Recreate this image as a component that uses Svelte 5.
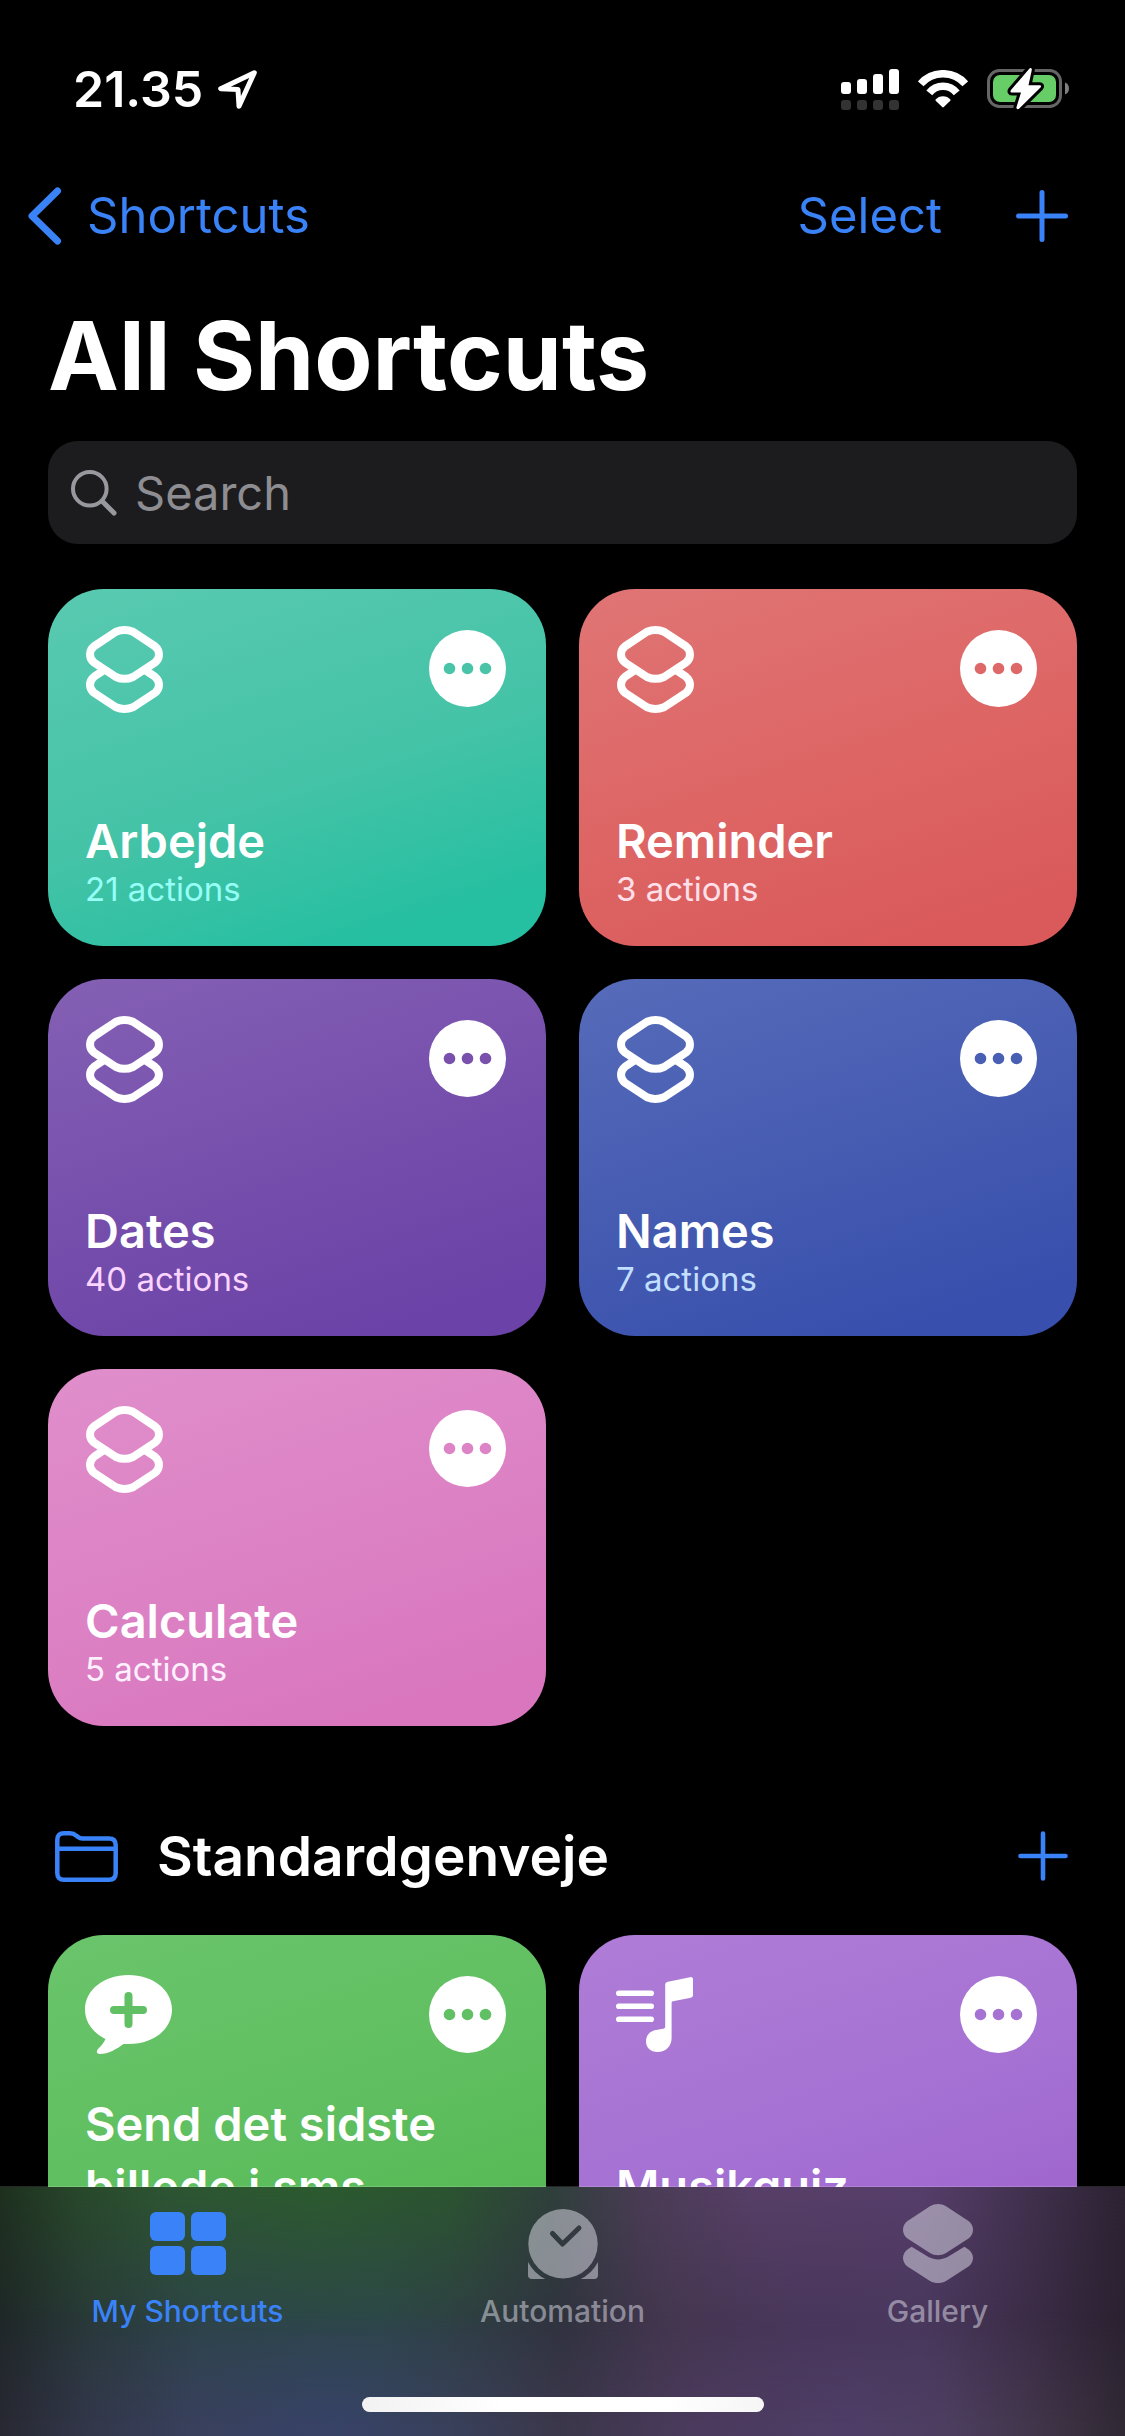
<script>
  const shortcuts = [
    { name: 'Arbejde', count: '21 actions', tone: 'teal', icon: 'stack' },
    { name: 'Reminder', count: '3 actions', tone: 'red', icon: 'stack' },
    { name: 'Dates', count: '40 actions', tone: 'violet', icon: 'stack' },
    { name: 'Names', count: '7 actions', tone: 'blue', icon: 'stack' },
    { name: 'Calculate', count: '5 actions', tone: 'pink', icon: 'stack' }
  ];
  const starters = [
    { name: 'Send det sidste billede i sms', count: '', tone: 'green', icon: 'bubble' },
    { name: 'Musikquiz', count: '', tone: 'lilac', icon: 'music' }
  ];
  let query = $state('');
</script>

{#snippet card(item)}
  <article class="card {item.tone}">
    <div class="card-top">
      {#if item.icon === 'stack'}
        <svg width="77" height="87" viewBox="-1 -1 77 87" overflow="visible" fill="none" stroke="#fff" stroke-width="8" aria-hidden="true">
          <path d="M30 5.7C35.5 3.4 41.5 3.4 47 5.7L69 20.3C74.3 24.5 74.3 32.3 69 36.5L47 51C41.5 53.4 35.5 53.4 30 51L8 36.5C2.7 32.3 2.7 24.5 8 20.3Z" />
          <path d="M19 43.4L8 50.8C2.7 55 2.7 62.6 8 66.8L30 81.3C35.5 83.6 41.5 83.6 47 81.3L69 66.8C74.3 62.6 74.3 55 69 50.8L58 43.4" />
        </svg>
      {:else if item.icon === 'bubble'}
        <svg width="87" height="79" viewBox="0 0 87 79" aria-hidden="true">
          <path fill="#fff" d="M43.500 0C68 0 87 15 87 34.500C87 54 69 69 43.500 69L38.500 69C32 74 23 79 15 79C11.500 79 11 76.500 13 74C16.500 70.500 19 67.500 20.500 64C7.500 57.500 0 47 0 34.500C0 15 19 0 43.500 0Z" />
          <path class="cut" stroke-width="8" stroke-linecap="round" d="M43.500 21V49M29 35H58" />
        </svg>
      {:else}
        <svg width="77" height="75" viewBox="0 0 77 75" aria-hidden="true">
          <path stroke="#fff" stroke-width="5.600" stroke-linecap="round" d="M2.800 16.300H35.200M2.800 29.300H35.200M2.800 42.300H35.200" />
          <path fill="#fff" d="M52 4.700L74 0.200C76 -0.200 77 0.800 77 2.500V18C77 19.500 76.200 20.400 74.800 20.700L57 24.300C56 24.500 55.600 25 55.600 26V61C55.600 69 50 75 41.500 75C34.500 75 30 70.800 30 64.500C30 58 34 54 40 53L47 51.800C48.500 51.500 49.200 51 49.200 49.500V8C49.200 6 50 5.100 52 4.700Z" />
        </svg>
      {/if}
      <button class="more" aria-label="Edit {item.name}">
        <svg width="77" height="77" viewBox="0 0 77 77" aria-hidden="true">
          <circle cx="20.500" cy="38.500" r="5.800" /><circle cx="38.500" cy="38.500" r="5.800" /><circle cx="56.500" cy="38.500" r="5.800" />
        </svg>
      </button>
    </div>
    <div class="card-text">
      <h3>{item.name}</h3>
      <p>{item.count}</p>
    </div>
  </article>
{/snippet}

<div class="screen">
  <header class="status">
    <div class="clock">
      <span>21.35</span>
      <svg width="39" height="39" viewBox="0 0 39 39" fill="none" stroke="#fff" stroke-width="5" stroke-linejoin="round" aria-hidden="true">
        <path d="M36.300 2.700L2.700 18.700L20 19.500L21 36.300Z" />
      </svg>
    </div>
    <div class="indicators">
      <svg width="58" height="41" viewBox="0 0 58 41" aria-hidden="true">
        <g fill="#fff">
          <rect x="0" y="13" width="10" height="12" rx="3" /><rect x="16" y="10" width="10" height="15" rx="3" /><rect x="32" y="5" width="10" height="20" rx="3" /><rect x="48" y="0" width="10" height="25" rx="3" />
        </g>
        <g fill="#333">
          <rect x="0" y="31" width="10" height="10" rx="3" /><rect x="16" y="31" width="10" height="10" rx="3" /><rect x="32" y="31" width="10" height="10" rx="3" /><rect x="48" y="31" width="10" height="10" rx="3" />
        </g>
      </svg>
      <svg width="50" height="38" viewBox="0 0 50 38" aria-hidden="true">
        <g fill="none" stroke="#fff" stroke-width="7.500">
          <path d="M2.700 13.800A29.700 29.700 0 0 1 47.300 13.800" />
          <path d="M11.300 22.800A17.500 17.500 0 0 1 38.700 22.800" />
        </g>
        <path fill="#fff" d="M17.600 29.500C21 25 29 25 32.400 29.500C32.700 30 32.600 30.300 32.300 30.700L25.800 37C25.300 37.500 24.700 37.500 24.200 37L17.700 30.700C17.400 30.300 17.300 30 17.600 29.500Z" />
      </svg>
      <svg width="82" height="42" viewBox="0 0 82 42" aria-hidden="true">
        <rect x="1.500" y="2.500" width="72" height="36" rx="11" fill="none" stroke="#666" stroke-width="3" />
        <rect x="6" y="7" width="63" height="27" rx="7" fill="#67ce67" />
        <path fill="#808080" d="M78 14.500C83.300 16 83.300 25 78 26.500Z" />
        <path fill="#fff" stroke="#000" stroke-width="6" stroke-linejoin="round" paint-order="stroke" d="M42.500 0.500L24 22C23 23.500 23.500 24.500 25 24.500H34L29.500 39C29 41 31 42 32.500 40.300L53.500 19.500C54.500 18.200 54 17.200 52.500 17.200H41.500L44.800 2C45 0.300 43.700 -0.700 42.500 0.500Z" />
      </svg>
    </div>
  </header>

  <nav class="navbar" aria-label="Navigation">
    <a class="back" href="#shortcuts">
      <svg width="34" height="58" viewBox="0 0 34 58" fill="none" stroke="currentColor" stroke-width="7" stroke-linecap="round" stroke-linejoin="round" aria-hidden="true">
        <path d="M29.500 4L4 29L29.500 54" />
      </svg>
      <span>Shortcuts</span>
    </a>
    <div class="nav-actions">
      <button class="plain">Select</button>
      <button class="plain" aria-label="New shortcut">
        <svg width="52" height="52" viewBox="0 0 52 52" stroke="currentColor" stroke-width="5" stroke-linecap="round" aria-hidden="true"><path d="M26 2.500V49.500M2.500 26H49.500" /></svg>
      </button>
    </div>
  </nav>

  <main>
    <h1>All Shortcuts</h1>
    <label class="search">
      <svg width="46" height="46" viewBox="0 0 46 46" fill="none" stroke="#98989f" stroke-linecap="round" aria-hidden="true">
        <circle cx="18.800" cy="18.800" r="16.800" stroke-width="4" />
        <path stroke-width="5" d="M31.500 31.500L43 43" />
      </svg>
      <input type="text" placeholder="Search" aria-label="Search" bind:value={query} />
    </label>

    <section class="grid">
      {#each shortcuts as item}{@render card(item)}{/each}
    </section>

    <section>
      <div class="folder-head">
        <svg width="63" height="51" viewBox="0 0 63 51" fill="none" stroke="#3a82f7" stroke-width="4.500" stroke-linejoin="round" aria-hidden="true">
          <path d="M2.300 9C2.300 4.500 4.500 2.300 9 2.300H15C18 2.300 19.500 3 21.500 4.800L23 6C24.500 7.200 25.500 7.500 27.500 7.500H54C58.500 7.500 60.700 9.700 60.700 14.200V42C60.700 46.500 58.500 48.700 54 48.700H9C4.500 48.700 2.300 46.500 2.300 42ZM2.300 17.800H60.700" />
        </svg>
        <h2>Standardgenveje</h2>
        <button class="plain" aria-label="Add to Standardgenveje">
          <svg width="50" height="50" viewBox="0 0 50 50" stroke="currentColor" stroke-width="4.600" stroke-linecap="round" aria-hidden="true"><path d="M25 2.500V47.500M2.500 25H47.500" /></svg>
        </button>
      </div>
      <div class="grid">
        {#each starters as item}{@render card(item)}{/each}
      </div>
    </section>
  </main>

  <footer class="tabbar">
    <nav class="tabs" aria-label="Tabs">
      <a class="tab active" href="#my-shortcuts" aria-current="page">
        <svg width="76" height="80" viewBox="0 0 76 80" fill="currentColor" aria-hidden="true">
          <rect x="0" y="8" width="35" height="29" rx="6" /><rect x="41" y="8" width="35" height="29" rx="6" /><rect x="0" y="42" width="35" height="29" rx="6" /><rect x="41" y="42" width="35" height="29" rx="6" />
        </svg>
        <span>My Shortcuts</span>
      </a>
      <a class="tab" href="#automation">
        <svg width="70" height="80" viewBox="0 -5 70 80" aria-hidden="true">
          <mask id="face">
            <circle cx="35" cy="34.700" r="34.700" fill="#fff" />
            <path d="M24.500 24.500L34.500 35L51 19" fill="none" stroke="#000" stroke-width="5" stroke-linecap="round" stroke-linejoin="round" />
          </mask>
          <mask id="feet">
            <rect x="0" y="50" width="70" height="20" rx="4" fill="#fff" />
            <circle cx="35" cy="34.700" r="39.500" fill="#000" />
          </mask>
          <rect width="70" height="70" fill="currentColor" mask="url(#face)" />
          <rect width="70" height="70" fill="currentColor" mask="url(#feet)" />
        </svg>
        <span>Automation</span>
      </a>
      <a class="tab" href="#gallery">
        <svg width="70" height="80" viewBox="0 0 70 80" fill="currentColor" aria-hidden="true">
          <path d="M27 2.200C32 -0.600 38 -0.600 43 2.200L65.500 17C71.500 21.500 71.500 30 65.500 34.500L43 49C38 51.900 32 51.900 27 49L4.500 34.500C-1.500 30 -1.500 21.500 4.500 17Z" />
          <path d="M8.600 42.700L25.500 53C32 56.200 38 56.200 44.500 53L61.400 42.700L65.500 45.500C71.500 50 71.500 58 65.500 62.500L43 77C38 79.800 32 79.800 27 77L4.500 62.500C-1.500 58 -1.500 50 4.500 45.500Z" />
        </svg>
        <span>Gallery</span>
      </a>
    </nav>
    <div class="home"></div>
  </footer>
</div>

<style>
  :global(body) {
    margin: 0;
    background: #000;
  }
  .screen {
    position: relative;
    height: 100vh;
    overflow: hidden;
    background: #000;
    color: #fff;
    font-family: Inter, 'Liberation Sans', sans-serif;
  }
  .screen :is(h1, h2, h3, p) {
    margin: 0;
  }
  svg {
    display: block;
    flex: none;
  }
  .status {
    display: flex;
    justify-content: space-between;
    align-items: center;
    height: 58px;
    padding: 60px 56px 0 73px;
  }
  .clock {
    display: flex;
    align-items: center;
    gap: 15px;
    font-size: 50px;
    font-weight: 600;
    line-height: 58px;
  }
  .indicators {
    display: flex;
    align-items: center;
    gap: 19px;
  }
  .navbar {
    display: flex;
    justify-content: space-between;
    align-items: center;
    height: 80px;
    padding: 58px 57px 0 28px;
    margin-bottom: 48px;
    font-size: 49px;
    line-height: 60px;
  }
  .back {
    display: flex;
    align-items: center;
    gap: 25px;
    color: #3a82f7;
    text-decoration: none;
  }
  .nav-actions {
    display: flex;
    align-items: center;
    gap: 74px;
  }
  .plain {
    padding: 0;
    border: 0;
    background: none;
    color: #3a82f7;
    font: inherit;
  }
  main {
    padding: 0 48px;
  }
  h1 {
    font-size: 95px;
    font-weight: 700;
    line-height: 104px;
  }
  .search {
    display: flex;
    align-items: center;
    gap: 18px;
    height: 103px;
    margin: 33px 0 45px;
    padding: 0 23px;
    border-radius: 30px;
    background: #1c1c1e;
  }
  .search input {
    flex: 1;
    min-width: 0;
    padding: 0;
    border: 0;
    outline: 0;
    background: none;
    color: #fff;
    font: 47px/60px Inter, 'Liberation Sans', sans-serif;
  }
  .search input::placeholder {
    color: #8d8d92;
    opacity: 1;
  }
  .grid {
    display: grid;
    grid-template-columns: 1fr 1fr;
    gap: 33px;
  }
  .card {
    display: flex;
    flex-direction: column;
    justify-content: space-between;
    box-sizing: border-box;
    min-height: 357px;
    padding: 36px 40px 40px 37px;
    border-radius: 56px;
    background: linear-gradient(162deg, var(--from), var(--mid) 52%, var(--to) 88%);
  }
  .card-top {
    display: flex;
    justify-content: space-between;
    align-items: center;
    height: 87px;
  }
  .more {
    padding: 0;
    border: 0;
    border-radius: 50%;
    background: #fff;
  }
  .more svg {
    fill: var(--dot);
  }
  .cut {
    stroke: var(--dot);
  }
  .card h3 {
    font-size: 47px;
    font-weight: 600;
    line-height: 63px;
  }
  .card p {
    min-height: 34px;
    color: var(--sub);
    font-size: 33px;
    line-height: 34px;
  }
  .teal { --from: #59cab1; --mid: #45c3a7; --to: #25bfa1; --dot: #49c4a9; --sub: #96fff6; }
  .red { --from: #e07575; --mid: #dd6564; --to: #da5a5b; --dot: #dd6867; --sub: #ffe0ea; }
  .violet { --from: #8460b4; --mid: #754eac; --to: #6b42a7; --dot: #7a50ad; --sub: #fbd4ff; }
  .blue { --from: #566bb9; --mid: #455bb1; --to: #384fad; --dot: #485fb4; --sub: #c3dfff; }
  .pink { --from: #e08ecb; --mid: #dc81c4; --to: #d976be; --dot: #dd84c6; --sub: #fff0ff; }
  .green { --from: #6ac46b; --mid: #5fbf60; --to: #55b752; --dot: #61c063; --sub: #e0ffe0; }
  .lilac { --from: #af7dd7; --mid: #a571d3; --to: #9e64cd; --dot: #a673d2; --sub: #f4e2ff; }
  .folder-head {
    display: flex;
    align-items: center;
    gap: 39px;
    height: 76px;
    padding: 92px 9px 41px 7px;
  }
  .folder-head h2 {
    flex: 1;
    font-size: 55px;
    font-weight: 600;
    line-height: 68px;
  }
  .tabbar {
    position: absolute;
    right: 0;
    bottom: 0;
    left: 0;
    display: flex;
    flex-direction: column;
    justify-content: space-between;
    align-items: center;
    box-sizing: border-box;
    height: 250px;
    padding: 17px 0 24px;
    border-top: 1px solid rgba(255, 255, 255, 0.15);
    background: linear-gradient(90deg, #1f2728, #29393a 8%, #2d444a 18%, #2d464a 34%, #2f3d43 42%, #30323f 50%, #44364f 60%, #48365b 72%, #48375c 82%, #3a2b45 92%, #2a2130) padding-box;
  }
  .tabbar::before,
  .tabbar::after {
    content: '';
    position: absolute;
    inset: 0;
  }
  .tabbar::before {
    background: linear-gradient(90deg, #1e301f, #28482a 7%, #2d5532 15%, #2c5a2e 28%, #2b5430 40%, #2f403b 49%, #4a3c55 57%, #573f67 67%, #563e6a 82%, #40304c 92%, #2c2232);
    mask-image: linear-gradient(#000, transparent 60%);
  }
  .tabbar::after {
    background: linear-gradient(90deg, #272832, #32374a 8%, #38405c 17%, #374267 30%, #38405a 40%, #3b374a 50%, #4b3a5d 62%, #4e3d66 76%, #4d3e60 84%, #41354a 92%, #302833);
    mask-image: linear-gradient(transparent 50%, #000 95%);
  }
  .tabs {
    position: relative;
    z-index: 1;
    display: grid;
    grid-template-columns: repeat(3, 1fr);
    width: 100%;
  }
  .tab {
    display: flex;
    flex-direction: column;
    align-items: center;
    gap: 9px;
    color: rgba(235, 235, 245, 0.48);
    font-size: 30px;
    font-weight: 500;
    line-height: 36px;
    text-decoration: none;
  }
  .tab.active {
    color: #3a82f7;
  }
  .home {
    position: relative;
    z-index: 1;
    width: 402px;
    height: 15px;
    border-radius: 8px;
    background: linear-gradient(90deg, #f2f2f2, #fff 35%, #fff 75%, #f6f6f6);
  }
</style>
